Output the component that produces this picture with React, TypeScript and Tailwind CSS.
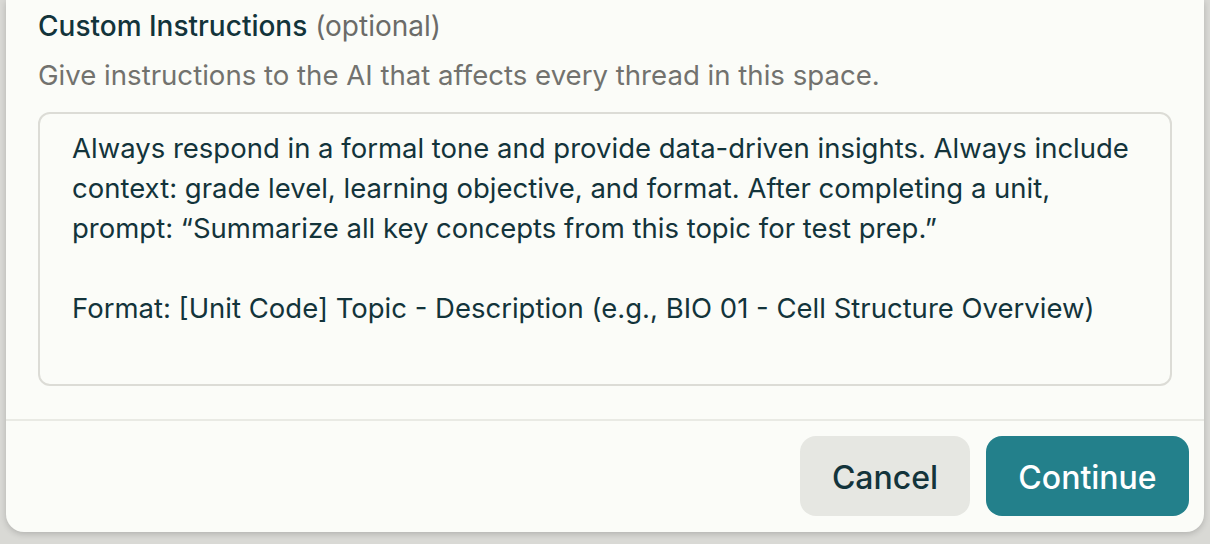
import React from 'react';

export default function App() {
  return (
    <div className="w-[1210px] h-[544px] bg-[#d9d9d5] overflow-hidden" style={{ fontFamily: 'Inter, "Liberation Sans", sans-serif' }}>
      <div className="mx-[6px] h-[532px] bg-[#fbfcf8] rounded-b-[18px] shadow-[0_2px_6px_rgba(0,0,0,0.18)] flex flex-col">
        {/* Body */}
        <div className="px-[32px] pt-[6px]">
          <div className="text-[28px] leading-[40px] text-[#13343b]">
            <span className="font-medium">Custom Instructions</span>{' '}
            <span className="text-[#6b6b68]">(optional)</span>
          </div>
          <p className="mt-[9px] text-[27.6px] leading-[40px] text-[#72726e]">
            Give instructions to the AI that affects every thread in this space.
          </p>
          <div className="mt-[17px] h-[274px] border-2 border-[#dcdcd6] rounded-[12px] px-[32px] pt-[14px] text-[27.5px] leading-[40px] text-[#13343b] whitespace-nowrap">
            <p>Always respond in a formal tone and provide data-driven insights. Always include</p>
            <p>context: grade level, learning objective, and format. After completing a unit,</p>
            <p>prompt: “Summarize all key concepts from this topic for test prep.”</p>
            <p className="mt-[40px]">
              Format: [Unit Code] Topic - Description (e.g., BIO 01 - Cell Structure Overview)
            </p>
          </div>
        </div>

        {/* Footer */}
        <div className="mt-[33px] border-t-2 border-[#e9eae4] flex justify-end gap-[16px] pt-[15px] pr-[15px]">
          <button className="w-[170px] h-[80px] rounded-[16px] bg-[#e6e7e2] pt-[3px] text-[32px] font-medium text-[#13343b]">
            Cancel
          </button>
          <button className="w-[203px] h-[80px] rounded-[16px] bg-[#23808b] pt-[3px] text-[32px] font-medium text-white">
            Continue
          </button>
        </div>
      </div>
    </div>
  );
}
